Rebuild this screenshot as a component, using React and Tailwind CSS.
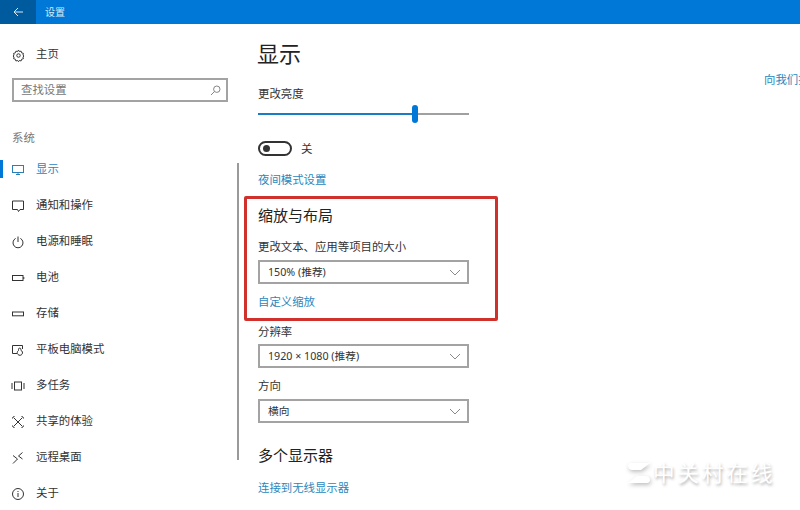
const font = { fontFamily: '"Noto Sans", "Noto Sans CJK SC", sans-serif' };

const Svg = ({ children, color = '#333' }) => (
  <svg width="14" height="14" viewBox="0 0 14 14" fill="none" stroke={color} strokeWidth="1" className="shrink-0">
    {children}
  </svg>
);

const icons = {
  display: (
    <Svg color="#2a7fb5">
      <rect x="1.5" y="2.5" width="11" height="7" />
      <path d="M5 11.5h4M7 9.5v2" />
    </Svg>
  ),
  notify: (
    <Svg>
      <path d="M1.5 2h11v8.5H9L7.5 12.5 6.5 10.5H1.5z" />
    </Svg>
  ),
  power: (
    <Svg>
      <path d="M4.6 3.4a5 5 0 1 0 4.8 0M7 1.5v5.5" />
    </Svg>
  ),
  battery: (
    <Svg>
      <rect x="1.5" y="4.5" width="10.5" height="5" />
      <path d="M12.8 6v2" />
    </Svg>
  ),
  storage: (
    <Svg>
      <rect x="1.5" y="5" width="11" height="3.8" />
    </Svg>
  ),
  tablet: (
    <Svg>
      <path d="M6 10.5H1.5v-8h10v3.5" />
      <path d="M7.5 7.5v-1.2a1.2 1.2 0 0 1 2.4 0v1a2.6 2.6 0 1 1-2.4.2z" />
    </Svg>
  ),
  multi: (
    <Svg>
      <rect x="3.5" y="3" width="7" height="8" />
      <path d="M1 4v6M13 4v6" />
    </Svg>
  ),
  share: (
    <Svg>
      <path d="M3 3l8 8M11 3l-8 8" />
      <path d="M1.5 3.5a2 2 0 0 1 2-2M10.5 1.5a2 2 0 0 1 2 2M1.5 10.5a2 2 0 0 0 2 2M10.5 12.5a2 2 0 0 0 2-2" />
    </Svg>
  ),
  remote: (
    <Svg>
      <path d="M2 4.5l4.5 3.5L2 12.5M11.5 1.5L7.5 5l4 3" />
    </Svg>
  ),
  about: (
    <Svg>
      <circle cx="7" cy="7" r="5.5" />
      <path d="M7 6v4M7 4v1" />
    </Svg>
  ),
};

const items = [
  ['显示', 'display', true],
  ['通知和操作', 'notify'],
  ['电源和睡眠', 'power'],
  ['电池', 'battery'],
  ['存储', 'storage'],
  ['平板电脑模式', 'tablet'],
  ['多任务', 'multi'],
  ['共享的体验', 'share'],
  ['远程桌面', 'remote'],
  ['关于', 'about'],
];

const Select = ({ children }) => (
  <div className="w-[211px] h-[24px] border-2 border-[#a3a3a3] flex items-center justify-between pl-[8px] pr-[6px] text-[10.7px] text-[#333] leading-none">
    <span>{children}</span>
    <svg width="12" height="7" viewBox="0 0 12 7" fill="none" stroke="#8a8a8a" strokeWidth="1">
      <path d="M1 1l5 5 5-5" />
    </svg>
  </div>
);

const Label = ({ children, className = '' }) => (
  <div className={`h-[16px] leading-[16px] text-[11.4px] text-[#333] ${className}`}>{children}</div>
);

const LinkText = ({ children, className = '' }) => (
  <div className={`h-[16px] leading-[16px] text-[11.4px] text-[#2b87bd] ${className}`}>{children}</div>
);

export default function App() {
  return (
    <div style={font} className="relative w-[800px] h-[510px] overflow-hidden bg-white">
      <div className="h-[24px] bg-[#0078d7] flex items-center text-white">
        <div className="w-[36px] h-full bg-[#005a9e] flex items-center justify-center">
          <svg width="11" height="10" viewBox="0 0 11 10" fill="none" stroke="#dbe9f5" strokeWidth="1">
            <path d="M10 5H1M5 1L1 5l4 4" />
          </svg>
        </div>
        <span className="ml-[9px] text-[10px] text-[#d8ebf8]">设置</span>
      </div>

      <div className="flex h-[486px]">
        <aside className="relative w-[238px] shrink-0 pt-[13px]">
          <div className="h-[36px] flex items-center pl-[12px] text-[11.4px] text-[#333]">
            <svg width="13" height="13" viewBox="0 0 24 24" fill="none" stroke="#333" strokeWidth="1.8" className="shrink-0">
              <circle cx="12" cy="12" r="3.2" />
              <path d="M12 1.8l1.6 3 3.2-.9 1 3.2 3.3 1-.9 3.2 2 1.7-2 1.7.9 3.2-3.3 1-1 3.2-3.2-.9-1.6 2.3-1.6-2.3-3.2.9-1-3.2-3.3-1 .9-3.2-2-1.7 2-1.7-.9-3.2 3.3-1 1-3.2 3.2.9z" />
            </svg>
            <span className="ml-[11px] mb-[2px]">主页</span>
          </div>
          <div className="mt-[5px] ml-[12px] w-[216px] h-[24px] border-2 border-[#a3a3a3] flex items-center justify-between pl-[7px] pr-[5px] text-[11.4px] text-[#777]">
            <span>查找设置</span>
            <svg width="11" height="11" viewBox="0 0 11 11" fill="none" stroke="#777" strokeWidth="0.9">
              <circle cx="6.8" cy="4.2" r="3.2" />
              <path d="M4.4 6.6L1 10" />
            </svg>
          </div>
          <div className="mt-[26px] mb-[4px] pl-[12px] h-[20px] leading-[20px] text-[11.4px] text-[#777]">系统</div>
          <nav>
            {items.map(([label, icon, active]) => (
              <div key={label} className="relative h-[36px] flex items-center pl-[11px] text-[11.4px]">
                {active && <div className="absolute left-0 top-[8px] w-[3px] h-[18px] bg-[#0078d7]" />}
                {icons[icon]}
                <span className={`ml-[11px] mb-[2px] ${active ? 'text-[#2b87bd]' : 'text-[#333]'}`}>{label}</span>
              </div>
            ))}
          </nav>
          <div className="absolute -right-px top-[139px] w-[2px] h-[297px] bg-[#9a9a9a]" />
        </aside>

        <main className="w-[526px] shrink-0 pl-[20px] pt-[11px]">
          <h1 className="h-[36px] leading-[36px] text-[22px] text-[#222] -ml-px">显示</h1>
          <Label className="mt-[15px]">更改亮度</Label>
          <div className="mt-[3px] w-[211px] h-[18px] flex items-center">
            <div className="w-[154px] h-[2px] bg-[#1a7cc4]" />
            <div className="w-[6px] h-[18px] rounded-[3px] bg-[#0078d7]" />
            <div className="flex-1 h-[2px] bg-[#a0a0a0]" />
          </div>
          <div className="mt-[18px] h-[15px] flex items-center">
            <div className="w-[34px] h-[15px] rounded-full border-2 border-[#333] flex items-center pl-[3px]">
              <div className="w-[7px] h-[7px] rounded-full bg-[#333]" />
            </div>
            <span className="ml-[9px] text-[11.4px] text-[#333]">关</span>
          </div>
          <LinkText className="mt-[16px]">夜间模式设置</LinkText>

          <section className="mt-[8px] -ml-[14px] w-[254px] h-[125px] border-[3px] border-[#d0312d] rounded-[2px] pl-[11px] pt-[5px]">
            <h2 className="h-[22px] leading-[22px] text-[15px] text-[#222]">缩放与布局</h2>
            <Label className="mt-[13px]">更改文本、应用等项目的大小</Label>
            <div className="mt-[5px]">
              <Select>150% (推荐)</Select>
            </div>
            <LinkText className="mt-[10px]">自定义缩放</LinkText>
          </section>

          <Label className="mt-[3px]">分辨率</Label>
          <div className="mt-[4px]">
            <Select>1920 × 1080 (推荐)</Select>
          </div>
          <Label className="mt-[10px]">方向</Label>
          <div className="mt-[5px]">
            <Select>横向</Select>
          </div>
          <h2 className="mt-[21px] h-[22px] leading-[22px] text-[15px] text-[#222]">多个显示器</h2>
          <LinkText className="mt-[14px]">连接到无线显示器</LinkText>
        </main>

        <div className="w-[36px] shrink-0 overflow-hidden whitespace-nowrap pt-[48px] text-[11.4px] leading-[16px] text-[#2b87bd]">
          向我们提供反馈
        </div>
      </div>

      <div className="absolute left-[627px] top-[462px] flex items-center gap-[2px] text-white text-[21.5px] leading-none tracking-[3px] [text-shadow:1px_2px_3px_rgba(0,0,0,0.3)]">
        <svg width="24" height="22" viewBox="0 0 24 22" fill="#fff" className="drop-shadow-[1px_2px_2px_rgba(0,0,0,0.25)]">
          <path d="M4 1h19l-9 7H5C2 8 1 5 1 4s1-3 3-3zM10 21h10c2 0 3-2 3-3s-1-4-4-4h-9l-9 7z" />
        </svg>
        <span>中关村在线</span>
      </div>
    </div>
  );
}
